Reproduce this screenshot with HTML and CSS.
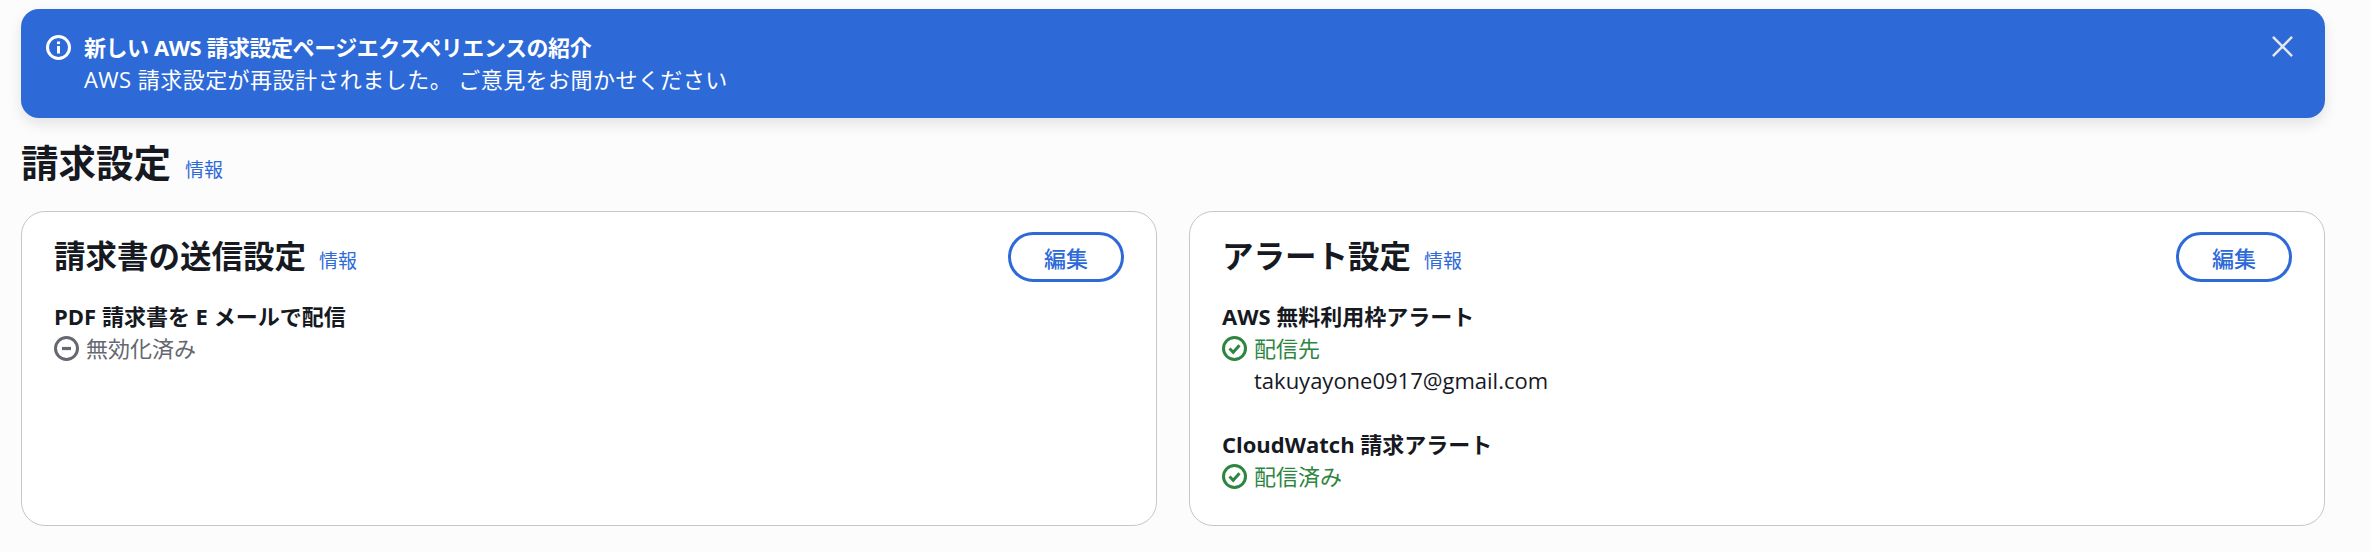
FILE: index.html
```html
<!DOCTYPE html>
<html lang="ja">
<head>
    <meta charset="UTF-8">
    <title>請求設定</title>
    <link rel="stylesheet" href="styles.css">
</head>
<body>
    <div class="flash">
        <svg class="flash-icon" viewBox="0 0 25 25" fill="none" stroke="#fff">
            <circle cx="12.5" cy="12.5" r="11" stroke-width="3"/>
            <path d="M12.5 11v7.5" stroke-width="3"/>
            <path d="M12.5 6.5v2.6" stroke-width="3"/>
        </svg>
        <div class="flash-body">
            <div class="flash-title">新しい AWS 請求設定ページエクスペリエンスの紹介</div>
            <div class="flash-text">AWS 請求設定が再設計されました。 ご意見をお聞かせください</div>
        </div>
        <svg class="flash-close" viewBox="0 0 22 22" fill="none" stroke="#e4e8f0" stroke-width="2.6">
            <path d="M1 1l20 20M21 1L1 21"/>
        </svg>
    </div>

    <div class="page-header">
        <h1>請求設定</h1>
        <a class="info-link">情報</a>
    </div>

    <div class="cards">
        <section class="card">
            <div class="card-header">
                <h2>請求書の送信設定</h2>
                <a class="info-link">情報</a>
                <button class="edit-button">編集</button>
            </div>
            <div class="field">
                <div class="field-label">PDF 請求書を E メールで配信</div>
                <div class="status status-off">
                    <svg class="status-icon" viewBox="0 0 25 25" fill="none" stroke="currentColor">
                        <circle cx="12.5" cy="12.5" r="11" stroke-width="3"/>
                        <path d="M8 12.5h9" stroke-width="3.2"/>
                    </svg>
                    無効化済み
                </div>
            </div>
        </section>

        <section class="card">
            <div class="card-header">
                <h2>アラート設定</h2>
                <a class="info-link">情報</a>
                <button class="edit-button">編集</button>
            </div>
            <div class="field">
                <div class="field-label">AWS 無料利用枠アラート</div>
                <div class="status status-on">
                    <svg class="status-icon" viewBox="0 0 25 25" fill="none" stroke="currentColor">
                        <circle cx="12.5" cy="12.5" r="11" stroke-width="3"/>
                        <path d="M7.5 12.5l3.7 3.7 6.3-7" stroke-width="3"/>
                    </svg>
                    配信先
                </div>
                <div class="status-detail">takuyayone0917@gmail.com</div>
            </div>
            <div class="field">
                <div class="field-label">CloudWatch 請求アラート</div>
                <div class="status status-on">
                    <svg class="status-icon" viewBox="0 0 25 25" fill="none" stroke="currentColor">
                        <circle cx="12.5" cy="12.5" r="11" stroke-width="3"/>
                        <path d="M7.5 12.5l3.7 3.7 6.3-7" stroke-width="3"/>
                    </svg>
                    配信済み
                </div>
            </div>
        </section>
    </div>
</body>
</html>
```

FILE: styles.css
```css
* {
    margin: 0;
    padding: 0;
    box-sizing: border-box;
}

html, body {
    height: 100%;
    width: 100%;
    overflow: hidden;
}

body {
    padding: 9px 45px 0 21px;
    font-family: "Open Sans", "Noto Sans CJK JP", sans-serif;
    font-size: 22px;
    line-height: 32px;
    color: #16191f;
    background-color: #fcfcfd;
}

.flash {
    display: flex;
    align-items: flex-start;
    height: 109px;
    padding: 26px 32px 0 25px;
    color: #ffffff;
    background-color: #2d6ad8;
    border-radius: 18px;
    box-shadow: 0 6px 14px rgba(0, 7, 22, 0.1);
}

.flash-icon {
    flex: none;
    width: 25px;
    height: 25px;
    margin-right: 13px;
}

.flash-body {
    flex: 1;
    margin-top: -4px;
}

.flash-title {
    font-weight: 700;
    letter-spacing: -0.45px;
}

.flash-text {
    letter-spacing: 0.45px;
}

.flash-close {
    flex: none;
    width: 21px;
    height: 21px;
    margin: 1px 0 0;
}

.page-header {
    display: flex;
    align-items: baseline;
    gap: 14px;
    margin-top: 22px;
    height: 71px;
}

h1 {
    font-size: 37.5px;
    line-height: 45px;
    font-weight: 700;
}

.info-link {
    font-size: 19px;
    line-height: 24px;
    color: #2d6ad8;
}

.cards {
    display: grid;
    grid-template-columns: 1fr 1fr;
    gap: 32px;
}

.card {
    height: 315px;
    padding: 19.5px 32px 0 32px;
    background-color: #ffffff;
    border: 1.5px solid #c6c6cd;
    border-radius: 24px;
}

.card-header {
    display: flex;
    align-items: baseline;
    gap: 13px;
    height: 66px;
    margin-bottom: 2.5px;
}

h2 {
    font-size: 31.5px;
    line-height: 48px;
    font-weight: 700;
}

.edit-button {
    width: 116px;
    height: 50px;
    margin-left: auto;
    align-self: flex-start;
    font-family: inherit;
    font-size: 22px;
    font-weight: 500;
    color: #2d6ad8;
    background: #ffffff;
    border: 3px solid #2d6ad8;
    border-radius: 25px;
}

.field {
    margin-bottom: 32px;
}

.field-label {
    font-weight: 700;
}

.status {
    display: flex;
    align-items: center;
    gap: 7px;
}

.status-off {
    color: #656871;
}

.status-on {
    color: #2e8540;
}

.status-icon {
    flex: none;
    width: 25px;
    height: 25px;
}

.status-detail {
    padding-left: 32px;
}
```
